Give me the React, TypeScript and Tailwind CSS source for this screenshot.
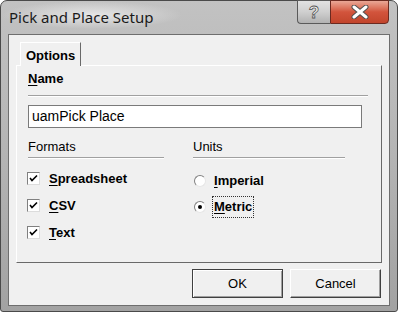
import * as React from 'react';

const CheckBox: React.FC<{ label: string; ul: string; rest: string }> = ({ label, ul, rest }) => (
    <div className="flex items-center h-[27px]" aria-label={label}>
        <div className="w-[13px] h-[13px] bg-white border border-t-[#808080] border-l-[#808080] border-r-[#dcdcdc] border-b-[#dcdcdc] flex items-center justify-center">
            <svg width="9" height="9" viewBox="0 0 9 9">
                <path d="M1 4 L3 6.5 L8 1.5" stroke="#000" strokeWidth="1.6" fill="none" />
            </svg>
        </div>
        <span className="ml-[9px] font-bold">
            <span className="underline underline-offset-2">{ul}</span>{rest}
        </span>
    </div>
);

const Radio: React.FC<{ checked?: boolean; focused?: boolean; ul: string; rest: string }> = ({ checked, focused, ul, rest }) => (
    <div className="flex items-center h-[26px]">
        <div className="w-[12px] h-[12px] rounded-full bg-white border border-t-[#808080] border-l-[#808080] border-r-[#e6e6e6] border-b-[#e6e6e6] flex items-center justify-center">
            {checked && <div className="w-[4px] h-[4px] rounded-full bg-black" />}
        </div>
        <span className={`ml-[7px] font-bold px-[1px] ${focused ? 'outline outline-1 outline-dotted outline-[#333]' : ''}`}>
            <span className="underline underline-offset-2">{ul}</span>{rest}
        </span>
    </div>
);

const Section: React.FC<{ title: string; width: string; children?: React.ReactNode }> = ({ title, width, children }) => (
    <div className={width}>
        <div className="h-[16px] leading-[16px]">{title}</div>
        <div className="mt-[2px] h-[2px] border-t border-[#a0a0a0] border-b border-b-white" />
        {children}
    </div>
);

export default function App() {
    return (
        <div className="w-[400px] h-[315px] bg-white" style={{ fontFamily: '"Liberation Sans", Arial, sans-serif' }}>
            <div className="w-[398px] h-[312px] rounded-t-[7px] rounded-b-[3px] border border-[#4a4a4a] bg-gradient-to-b from-[#c2c2c2] via-[#b4b4b4] to-[#a2a2a2] relative">
                {/* title bar */}
                <div className="h-[33px] flex items-start">
                    <div
                        className="pl-[8px] pt-[5px] text-[15px] text-[#1a1a1a] bg-[radial-gradient(ellipse_at_center,rgba(232,232,232,0.95),rgba(232,232,232,0)_70%)] pr-[30px]"
                        style={{ fontFamily: '"Noto Sans", "Open Sans", sans-serif' }}
                    >
                        Pick and Place Setup
                    </div>
                    <div className="ml-auto mr-[8px] flex -mt-[1px]">
                        <div className="w-[33px] h-[24px] rounded-bl-[4px] border border-[#5a5a5a] border-r-0 bg-gradient-to-b from-[#e2e2e2] via-[#cfcfcf] to-[#b2b2b2] flex items-center justify-center">
                            <span className="text-[17px] font-bold text-[#f4f4f4] leading-none" style={{ WebkitTextStroke: '0.8px #555' }}>?</span>
                        </div>
                        <div className="w-[59px] h-[24px] rounded-br-[4px] border border-[#6b2a20] bg-gradient-to-b from-[#e9a796] via-[#d2543c] to-[#c2452c] flex items-center justify-center">
                            <svg width="20" height="14" viewBox="0 0 20 14">
                                <path d="M4 2 L16 12 M16 2 L4 12" stroke="#505050" strokeWidth="5" strokeLinecap="round" />
                                <path d="M4 2 L16 12 M16 2 L4 12" stroke="#ffffff" strokeWidth="3" strokeLinecap="round" />
                            </svg>
                        </div>
                    </div>
                </div>

                {/* client area */}
                <div className="mx-[7px] h-[272px] border border-[#6e6e6e] bg-[#f0f0f0] text-[13px] text-black">
                    <div className="pl-[11px] pt-[7px] flex">
                        <div className="h-[24px] px-[5px] pt-[3px] border-t border-l border-white border-r border-r-[#696969] bg-[#f0f0f0] relative z-10 font-bold">
                            Options
                        </div>
                    </div>
                    <div className="-mt-[1px] ml-[7px] w-[366px] h-[198px] border border-t-white border-l-white border-r-[#696969] border-b-[#696969] pl-[11px] pr-[13px] pt-[5px]">
                        <div className="h-[16px] leading-[16px] font-bold">
                            <span className="underline underline-offset-2">N</span>ame
                        </div>
                        <div className="mt-[8px] h-[2px] border-t border-[#a0a0a0] border-b border-b-white" />
                        <div className="mt-[8px] w-[334px] h-[23px] bg-white border border-[#7a7a7a] flex items-center pl-[3px] text-[14px]">
                            uamPick Place
                        </div>
                        <div className="mt-[11px] flex">
                            <Section title="Formats" width="w-[136px]">
                                <div className="mt-[6px] -ml-[1px]">
                                    <CheckBox label="Spreadsheet" ul="S" rest="preadsheet" />
                                    <CheckBox label="CSV" ul="C" rest="SV" />
                                    <CheckBox label="Text" ul="T" rest="ext" />
                                </div>
                            </Section>
                            <Section title="Units" width="ml-[29px] w-[152px]">
                                <div className="mt-[9px] ml-[1px]">
                                    <Radio ul="I" rest="mperial" />
                                    <Radio checked focused ul="M" rest="etric" />
                                </div>
                            </Section>
                        </div>
                    </div>
                    <div className="flex justify-end gap-[7px] mt-[6px] mr-[8px]">
                        <button className="w-[91px] h-[29px] bg-[#f0f0f0] border border-[#404040] shadow-[inset_1px_1px_0_#fff,inset_-1px_-1px_0_#a0a0a0] text-[13px]">
                            OK
                        </button>
                        <button className="w-[91px] h-[29px] bg-[#f0f0f0] border border-t-white border-l-white border-r-[#404040] border-b-[#404040] shadow-[inset_-1px_-1px_0_#a0a0a0] text-[13px]">
                            Cancel
                        </button>
                    </div>
                </div>
            </div>
        </div>
    );
}
